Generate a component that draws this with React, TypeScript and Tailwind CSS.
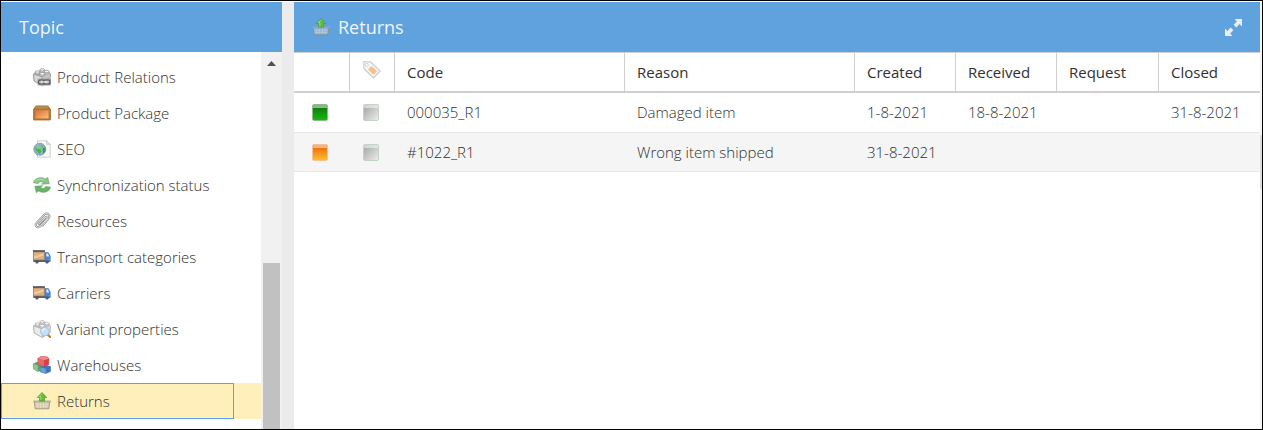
import { useState } from 'react';
import type { ReactNode } from 'react';
import clsx from 'clsx';

function BrickIcon({ dark = false }: { dark?: boolean }) {
    return (
        <g stroke={dark ? '#8c8c8c' : '#a9a9a9'} strokeWidth="0.7" strokeLinejoin="round">
            <path d="M.6 6 4.500 3.500l9-.8 4 3-.4 6.800L9.500 17.500 1.200 13z" fill={dark ? '#c4c4c4' : '#d6d6d6'} />
            <path d="M.6 6 9 8.800l.5 8.700L1.200 13z" fill={dark ? '#dadada' : '#ebebeb'} />
            <path d="M7 1.800v1.700c.6 1.300 4 1.300 4.500 0V1.800zM2.200 4v1.700c.6 1.300 4 1.300 4.500 0V4zM11.500 3.500v1.700c.6 1.300 4 1.300 4.500 0V3.500zM6.800 5.800v1.700c.6 1.300 4.300 1.300 4.900 0V5.800z" fill="#d8d8d8" />
            <ellipse cx="9.250" cy="1.800" rx="2.250" ry="1.200" fill="#f7f7f7" />
            <ellipse cx="4.450" cy="4" rx="2.250" ry="1.200" fill="#f7f7f7" />
            <ellipse cx="13.750" cy="3.500" rx="2.250" ry="1.200" fill="#f7f7f7" />
            <ellipse cx="9.250" cy="5.800" rx="2.450" ry="1.300" fill="#fafafa" />
        </g>
    );
}

function RelationsIcon() {
    return (
        <svg viewBox="0 0 18 18" className="size-[18px] shrink-0">
            <BrickIcon dark />
            <rect x="4.500" y="10.500" width="13.500" height="7" rx="1.500" fill="#a0a0a0" />
            <rect x="5.500" y="12" width="6.500" height="4" rx="2" fill="#bdbdbd" stroke="#555" strokeWidth="1.100" />
            <rect x="10.500" y="12" width="6.500" height="4" rx="2" fill="#bdbdbd" stroke="#555" strokeWidth="1.100" />
            <path d="M8 14h6.500" stroke="#f0f0f0" strokeWidth="1.200" />
        </svg>
    );
}

function PackageIcon() {
    return (
        <svg viewBox="0 0 18 18" className="size-[18px] shrink-0">
            <defs>
                <linearGradient id="box" x1="0" y1="0" x2="1" y2="1">
                    <stop offset="0" stopColor="#dd6e36" />
                    <stop offset="1" stopColor="#f8c27c" />
                </linearGradient>
            </defs>
            <path d="M3 1.500h12L17.700 5v11.200H.3V5z" fill="#99702f" />
            <path d="M3.300 2.200h11.400L16.500 5h-15z" fill="#b8904a" />
            <rect x="0.800" y="5" width="16.400" height="10.800" rx="0.800" fill="#c67b36" stroke="#966328" strokeWidth="0.600" />
            <rect x="2.500" y="6.500" width="13" height="7.800" fill="url(#box)" />
        </svg>
    );
}

function SeoIcon() {
    return (
        <svg viewBox="0 0 18 18" className="size-[18px] shrink-0">
            <path d="M4.500.8h9l3.700 3.700v12.700H4.500z" fill="#fafafa" stroke="#c2c2c2" strokeWidth="0.800" />
            <path d="M13.500.8v3.700h3.700z" fill="#e2e2e2" stroke="#c2c2c2" strokeWidth="0.600" />
            <circle cx="6.800" cy="9.300" r="6" fill="#86b4dd" stroke="#8597a8" strokeWidth="0.900" />
            <path d="M2.500 7.500C4 5 7.500 4 10 6l-.8 2.500-2 .8 1.300 2.200-2.200 2.500L4.500 12l-1.800-1.800z" fill="#56b04c" />
            <path d="M9.800 8.500l2.300-1.200.2 3.700-2.300 2.700z" fill="#369a39" />
            <ellipse cx="6" cy="7" rx="3" ry="2" fill="#fff" opacity="0.300" />
        </svg>
    );
}

function SyncIcon() {
    return (
        <svg viewBox="0 0 18 18" className="size-[18px] shrink-0">
            <g stroke="#5c9e5f" strokeWidth="0.600" strokeLinejoin="round">
                <path d="M.5 6.800C1.500 2 8 .2 12.200 3L14.700 1.500l1.500 6.200-7.700.5 2-1.700C8.300 5 6.200 5.300 5.200 7.500z" fill="#87c487" />
                <path d="M17.500 11.200c-1 4.800-7.500 6.600-11.700 3.800l-2.500 1.500L1.800 10.300l7.700-.5-2 1.700c2.200 1.500 4.300 1.200 5.300-1z" fill="#68b26b" />
            </g>
            <path d="M2 6C4 3 8 2.500 11.500 4.300" stroke="#bfe3bd" strokeWidth="0.900" fill="none" />
        </svg>
    );
}

function ClipIcon() {
    return (
        <svg viewBox="0 0 18 18" className="size-[18px] shrink-0" fill="none" strokeLinecap="round">
            <path d="M5.800 12.200 12.500 5.500M12.500 5.500c1-1 2.300.2 1.400 1.300L6.800 14.500c-2 2-5.500-.7-3.400-3.300l7.800-8.500c2.700-2.700 6.800.6 4.300 3.800L9.500 13.500" stroke="#7d7d7d" strokeWidth="2" />
            <path d="M5.800 12.200 12.500 5.500M12.500 5.500c1-1 2.300.2 1.400 1.300L6.800 14.500c-2 2-5.500-.7-3.400-3.300l7.800-8.500c2.700-2.700 6.800.6 4.300 3.800L9.500 13.500" stroke="#dadada" strokeWidth="1.100" />
        </svg>
    );
}

function TruckIcon() {
    return (
        <svg viewBox="0 0 18 18" className="size-[18px] shrink-0">
            <path d="M.3 12h17v2H.3z" fill="#59616a" />
            <rect x="0.300" y="2.500" width="11.200" height="9.500" fill="#e2ae7c" stroke="#75695c" strokeWidth="0.600" />
            <path d="M0 2.300h11.800v1.900H0z" fill="#59616a" />
            <path d="M1 8.500l9.500-3v2L1 10.500z" fill="#f1cda6" />
            <path d="M12 4.500h3.300l2 3.500v5H12z" fill="#4788d6" stroke="#3869a3" strokeWidth="0.500" />
            <path d="M13.300 5.500h1.600l1.400 3h-3z" fill="#dbebfa" />
            <circle cx="4" cy="14" r="1.600" fill="#3c4148" />
            <circle cx="14" cy="14" r="1.600" fill="#3c4148" />
            <circle cx="4" cy="14" r="0.600" fill="#bbb" />
            <circle cx="14" cy="14" r="0.600" fill="#bbb" />
            <path d="M16.500 11h1v1.500h-1z" fill="#f1a62c" />
        </svg>
    );
}

function VariantIcon() {
    return (
        <svg viewBox="0 0 18 18" className="size-[18px] shrink-0">
            <BrickIcon />
            <path d="M15.300 15.200l1.700 1.700" stroke="#bd8140" strokeWidth="2.200" strokeLinecap="round" />
            <circle cx="11.800" cy="11.500" r="4.300" fill="#c3dff9" stroke="#9dbfe2" strokeWidth="0.900" />
            <path d="M9.300 11c.3-1.500 1.500-2.200 2.800-2.200" stroke="#f2f9ff" strokeWidth="1.200" fill="none" />
        </svg>
    );
}

function WarehouseIcon() {
    return (
        <svg viewBox="0 0 18 18" className="size-[18px] shrink-0" strokeLinejoin="round">
            <path d="M.4 7.800 4.500 6l4.200 1.500v6.800L4.800 15.500.6 13z" fill="#5aa562" stroke="#4c9355" strokeWidth="0.500" />
            <path d="M.6 8 4.800 9.500v5.800L.8 13z" fill="#8bc98e" />
            <path d="M7.200 11 12 9.300l5.800 1.200-.3 5L12.800 17.500 7.400 16z" fill="#3f76b8" stroke="#3b6eab" strokeWidth="0.500" />
            <path d="M7.400 11.200 12.800 12.800v4.500L7.500 15.900z" fill="#6d9fd9" />
            <path d="M4.700 2.500 8 .6l6 .2 2 1.900-.3 6L11 10.500 5.300 8.500z" fill="#d44248" stroke="#c23c40" strokeWidth="0.500" />
            <path d="M4.900 2.800 11 4.200v6L5.400 8.400z" fill="#e7676a" />
            <path d="M4.900 2.500 8 .7l6 .2 1.800 1.800L11 4.200z" fill="#f08a8a" />
        </svg>
    );
}

function BasketIcon({ blue = false }: { blue?: boolean }) {
    return (
        <svg viewBox="0 0 18 18" className="size-[18px] shrink-0">
            <path d="M1.200 9.500h15.600l-1 7.300H2.200z" fill={blue ? '#8fb2d6' : '#d2c9a6'} stroke="#8d8d86" strokeWidth="0.800" />
            <path d="M4.500 10.500l.4 5.500M7.500 10.500v5.500M10.500 10.500v5.500M13.500 10.500l-.4 5.500M2 12.200h14M2.300 14.300h13.400" stroke={blue ? '#b9d5ef' : '#efe8cb'} strokeWidth="0.600" />
            <path d="M.3 8.500h17.400v1.900H.3z" fill={blue ? '#92a7ba' : '#b5b09a'} />
            <path d="M9 .4l4.800 5.100h-2.300V9h-5V5.500H4.200z" fill="#62bd3c" stroke="#44952d" strokeWidth="0.600" />
            <path d="M9 1.800 6.300 4.600h1.500v3.600" stroke="#a2dd7c" strokeWidth="0.900" fill="none" />
        </svg>
    );
}

function TagIcon() {
    return (
        <svg viewBox="0 0 18 18" className="size-[18px]">
            <path d="M.8.800h6.700L17.200 10l-6.700 6.900L.8 7.500z" fill="#f5f5f5" stroke="#cacaca" strokeWidth="1.100" />
            <circle cx="3.900" cy="3.900" r="1.500" fill="#fff" stroke="#cdcdcd" strokeWidth="0.800" />
            <path d="M8.500 5 14 10.200l-3.600 3.600L5 8.500z" fill="#ffbd86" />
        </svg>
    );
}

function ExpandIcon() {
    return (
        <svg viewBox="0 0 17 17" className="size-[17px]" fill="#e6f0fa">
            <path d="M9.500 0H17v7.500l-2.400-2.400-3.300 3.300-2.700-2.700 3.300-3.300z" />
            <path d="M7.500 17H0V9.500l2.400 2.400 3.300-3.300 2.700 2.700-3.300 3.300z" />
        </svg>
    );
}

const squares = {
    green: 'border-[#8fb98f] bg-linear-to-b from-[#0f700f] to-[#13bb08]',
    orange: 'border-[#f3c397] bg-linear-to-b from-[#e75d05] to-[#ffbd2c]',
    gray: 'border-[#c3d3c3] bg-linear-to-br from-[#a4a4a4] to-[#ececec]',
};

function StatusSquare({ color }: { color: keyof typeof squares }) {
    return (
        <span className={clsx('block h-[17px] w-4 overflow-hidden rounded-xs border', squares[color])}>
            <span className="block h-[3px] bg-white/50" />
        </span>
    );
}

const topics: { name: string; icon: ReactNode }[] = [
    { name: 'Product Relations', icon: <RelationsIcon /> },
    { name: 'Product Package', icon: <PackageIcon /> },
    { name: 'SEO', icon: <SeoIcon /> },
    { name: 'Synchronization status', icon: <SyncIcon /> },
    { name: 'Resources', icon: <ClipIcon /> },
    { name: 'Transport categories', icon: <TruckIcon /> },
    { name: 'Carriers', icon: <TruckIcon /> },
    { name: 'Variant properties', icon: <VariantIcon /> },
    { name: 'Warehouses', icon: <WarehouseIcon /> },
    { name: 'Returns', icon: <BasketIcon /> },
];

const columns = [
    { name: 'Code', width: 'w-[230px]' },
    { name: 'Reason', width: 'w-[230px]' },
    { name: 'Created', width: 'w-[101px]' },
    { name: 'Received', width: 'w-[101px]' },
    { name: 'Request', width: 'w-[102px]' },
    { name: 'Closed', width: '' },
];

const returns: { status: 'green' | 'orange'; cells: string[] }[] = [
    { status: 'green', cells: ['000035_R1', 'Damaged item', '1-8-2021', '18-8-2021', '', '31-8-2021'] },
    { status: 'orange', cells: ['#1022_R1', 'Wrong item shipped', '31-8-2021', '', '', ''] },
];

export default function App() {
    const [selected, setSelected] = useState('Returns');

    return (
        <div className="flex h-screen border border-black bg-white pt-px font-['Open_Sans',sans-serif] text-[15px] text-[#303030]">
            {/* Topic tree */}
            <aside className="flex w-[281px] shrink-0 flex-col">
                <h2 className="flex h-[50px] shrink-0 items-center bg-[#5fa2dd] px-[18px] text-lg text-[#f0f6fc]">Topic</h2>
                <div className="flex min-h-0 flex-1">
                    <nav className="min-w-0 flex-1 overflow-hidden pt-[7px]">
                        {topics.map((topic) => (
                            <button
                                key={topic.name}
                                type="button"
                                onClick={() => setSelected(topic.name)}
                                className={clsx('block h-9 w-full pr-[27px] text-left font-light', selected === topic.name && 'bg-[#ffefbb]')}
                            >
                                <span
                                    className={clsx(
                                        'flex h-full items-center gap-1.5 border pl-[31px]',
                                        selected === topic.name ? 'border-[#5fa2dd]' : 'border-transparent'
                                    )}
                                >
                                    {topic.icon}
                                    {topic.name}
                                </span>
                            </button>
                        ))}
                    </nav>
                    {/* Scrollbar */}
                    <div className="flex w-[21px] shrink-0 flex-col bg-[#f1f1f1] px-0.5">
                        <svg viewBox="0 0 9 5" className="mx-auto mt-[9px] h-[5px] w-[9px] shrink-0" fill="#505050">
                            <path d="M4.500 0 9 5H0z" />
                        </svg>
                        <div className="mt-[197px] flex-1 bg-[#c1c1c1]" />
                    </div>
                </div>
            </aside>

            <div className="w-3 shrink-0 bg-[#ebebeb]" />

            {/* Returns grid */}
            <main className="min-w-0 flex-1">
                <header className="flex h-[50px] items-center gap-2 bg-[#5fa2dd] px-[18px] text-lg text-[#f0f6fc]">
                    <BasketIcon blue />
                    <h1 className="flex-1">Returns</h1>
                    <button type="button" aria-label="Expand">
                        <ExpandIcon />
                    </button>
                </header>
                <table className="w-full table-fixed border-separate border-spacing-0 text-left">
                    <thead>
                        <tr className="h-[41px]">
                            <th className="w-14 border-t border-r border-b-2 border-[#cfcfcf]" />
                            <th className="w-[45px] border-t border-r border-b-2 border-[#cfcfcf] pb-1 pl-[13px]">
                                <TagIcon />
                            </th>
                            {columns.map((column) => (
                                <th
                                    key={column.name}
                                    className={clsx(
                                        'border-t border-r border-b-2 border-[#cfcfcf] px-3 font-normal last:border-r-0',
                                        column.width
                                    )}
                                >
                                    {column.name}
                                </th>
                            ))}
                        </tr>
                    </thead>
                    <tbody>
                        {returns.map((item) => (
                            <tr key={item.cells[0]} className="h-[39px] font-light first:h-10 even:bg-[#f5f5f5]">
                                <td className="border-b border-[#e8e8e8] pl-[18px]">
                                    <StatusSquare color={item.status} />
                                </td>
                                <td className="border-b border-[#e8e8e8] pl-[13px]">
                                    <StatusSquare color="gray" />
                                </td>
                                {item.cells.map((cell, i) => (
                                    <td key={i} className="border-b border-[#e8e8e8] px-3">
                                        {cell}
                                    </td>
                                ))}
                            </tr>
                        ))}
                    </tbody>
                </table>
            </main>

            {/* Edge of the window's scrollbar */}
            <div className="w-0.5 shrink-0 bg-[#f5f5f5] pt-[133px]">
                <div className="h-[54px] bg-[#dcdcdc]" />
            </div>
        </div>
    );
}
